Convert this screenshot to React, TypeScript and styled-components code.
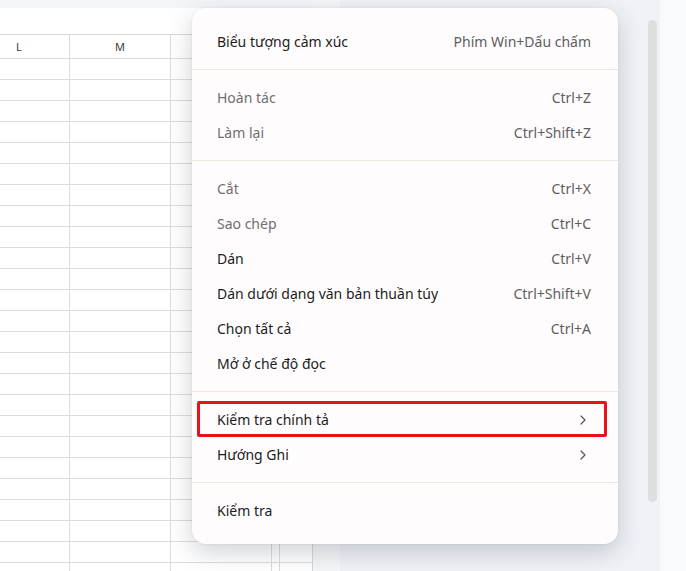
import React from "react";
import styled, { createGlobalStyle } from "styled-components";
import { ChevronRight } from "lucide-react";

const GlobalStyle = createGlobalStyle`
  html, body {
    margin: 0;
    padding: 0;
    background: #f3f5f8;
    font-family: "Noto Sans", "Open Sans", sans-serif;
  }
`;

const Page = styled.div`
  position: relative;
  width: 686px;
  height: 571px;
  overflow: hidden;
  display: flex;
  background: #f3f5f8;
`;

const Sheet = styled.div`
  width: 312px;
  margin-top: 8px;
  background: #ffffff;
  border-right: 1px solid #d6d6d6;
  overflow: hidden;
  display: flex;
  flex-direction: column;
`;

const SheetTop = styled.div`
  height: 26px;
  flex-shrink: 0;
  border-bottom: 1px solid #d9d9d9;
`;

const Row = styled.div<{ $header?: boolean }>`
  display: grid;
  grid-template-columns: 101px 101px 101px 8px 40px;
  margin-left: -31px;
  height: ${(p) => (p.$header ? "23px" : "20px")};
  flex-shrink: 0;
  border-bottom: 1px solid #dcdcdc;
`;

const Cell = styled.div`
  border-right: 1px solid #dcdcdc;
  display: flex;
  align-items: center;
  justify-content: center;
  font-size: 11px;
  color: #3a3a3a;
`;

const Gutter = styled.div`
  width: 27px;
  background: #f5f6f8;
`;

const Panel = styled.div`
  flex: 1;
  display: flex;
  justify-content: flex-end;
  padding: 20px 3px 0 0;
  background: #eff2f6;
`;

const ScrollThumb = styled.div`
  width: 9px;
  height: 482px;
  border-radius: 5px;
  background: #dcdedf;
`;

const RightStrip = styled.div`
  width: 26px;
  background: #f9fafb;
`;

const Menu = styled.div`
  position: absolute;
  left: 192px;
  top: 8px;
  width: 426px;
  padding: 6px 0;
  box-sizing: border-box;
  background: #fffcfd;
  border-radius: 14px;
  box-shadow: 0 8px 24px rgba(40, 50, 70, 0.22), 0 0 2px rgba(0, 0, 0, 0.08);
`;

const Section = styled.div`
  padding: 10px 0;
  & + & {
    border-top: 1px solid #efe5dc;
  }
`;

const Item = styled.div<{ $disabled?: boolean; $marked?: boolean }>`
  position: relative;
  height: 35px;
  display: flex;
  align-items: center;
  justify-content: space-between;
  padding: 0 27px 0 25px;
  font-size: 14px;
  color: ${(p) => (p.$disabled ? "#6f6f6f" : "#1c1c1c")};

  &::after {
    content: "";
    display: ${(p) => (p.$marked ? "block" : "none")};
    position: absolute;
    left: 5px;
    right: 11px;
    top: -1px;
    bottom: 0;
    border: 3px solid #e8121b;
    border-radius: 2px;
  }
`;

const Shortcut = styled.span`
  color: #5e5e5e;
`;

const Chevron = styled(ChevronRight)`
  color: #555;
`;

type Entry = {
  label: string;
  shortcut?: string;
  disabled?: boolean;
  submenu?: boolean;
  marked?: boolean;
};

const sections: Entry[][] = [
  [{ label: "Biểu tượng cảm xúc", shortcut: "Phím Win+Dấu chấm" }],
  [
    { label: "Hoàn tác", shortcut: "Ctrl+Z", disabled: true },
    { label: "Làm lại", shortcut: "Ctrl+Shift+Z", disabled: true },
  ],
  [
    { label: "Cắt", shortcut: "Ctrl+X", disabled: true },
    { label: "Sao chép", shortcut: "Ctrl+C", disabled: true },
    { label: "Dán", shortcut: "Ctrl+V" },
    { label: "Dán dưới dạng văn bản thuần túy", shortcut: "Ctrl+Shift+V" },
    { label: "Chọn tất cả", shortcut: "Ctrl+A" },
    { label: "Mở ở chế độ đọc" },
  ],
  [
    { label: "Kiểm tra chính tả", submenu: true, marked: true },
    { label: "Hướng Ghi", submenu: true },
  ],
  [{ label: "Kiểm tra" }],
];

const columns = ["L", "M", "", "", ""];

const App: React.FC = () => {
  const rows = Array.from({ length: 26 });

  return (
    <>
      <GlobalStyle />
      <Page>
        <Sheet>
          <SheetTop />
          <Row $header>
            {columns.map((c, i) => (
              <Cell key={i}>{c}</Cell>
            ))}
          </Row>
          {rows.map((_, r) => (
            <Row key={r}>
              {columns.map((_, i) => (
                <Cell key={i} />
              ))}
            </Row>
          ))}
        </Sheet>
        <Gutter />
        <Panel>
          <ScrollThumb />
        </Panel>
        <RightStrip />

        <Menu>
          {sections.map((section, s) => (
            <Section key={s}>
              {section.map((item) => (
                <Item
                  key={item.label}
                  $disabled={item.disabled}
                  $marked={item.marked}
                >
                  <span>{item.label}</span>
                  {item.shortcut && <Shortcut>{item.shortcut}</Shortcut>}
                  {item.submenu && <Chevron size={16} strokeWidth={1.8} />}
                </Item>
              ))}
            </Section>
          ))}
        </Menu>
      </Page>
    </>
  );
};

export default App;
